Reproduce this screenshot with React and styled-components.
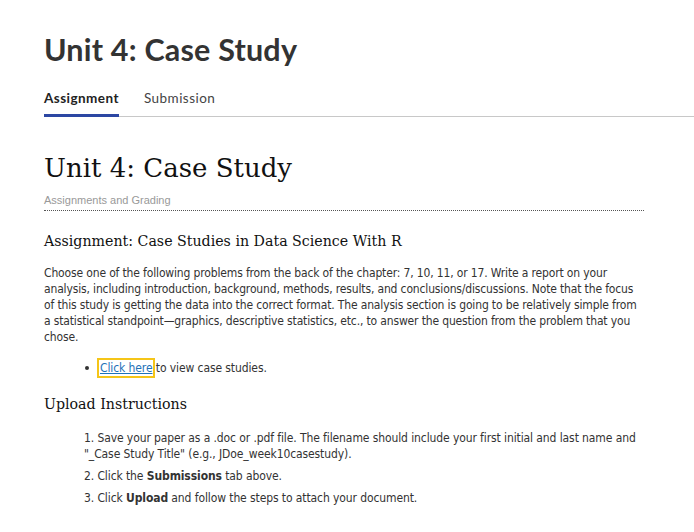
import React from "react";
import styled, { createGlobalStyle } from "styled-components";

const Global = createGlobalStyle`
  html, body { margin: 0; padding: 0; background: #fff; }
  body { font-family: "DejaVu Sans Condensed", "DejaVu Sans", sans-serif; color: #333; }
`;

const Page = styled.div`
  padding: 30px 0 0 44px;
`;

const TopTitle = styled.h1`
  margin: 0;
  font-family: Lato, "Open Sans", sans-serif;
  font-weight: 700;
  font-size: 30.5px;
  line-height: 38px;
  color: #333;
  letter-spacing: 0.2px;
`;

const Tabs = styled.nav`
  display: flex;
  gap: 25px;
  margin-top: 22px;
  border-bottom: 1px solid #c8c8c8;
`;

const Tab = styled.div`
  font-family: Lato, "Open Sans", sans-serif;
  font-size: 13.5px;
  font-weight: ${(p) => (p.$active ? 700 : 400)};
  color: ${(p) => (p.$active ? "#222" : "#444")};
  padding: 0 0 8px;
  border-bottom: 3px solid ${(p) => (p.$active ? "#2c47a3" : "transparent")};
  margin-bottom: -1px;
  letter-spacing: 0.45px;
`;

const Content = styled.div`
  width: 600px;
`;

const SerifTitle = styled.h2`
  margin: 31px 0 0;
  font-family: "DejaVu Serif", "Liberation Serif", serif;
  font-weight: 400;
  font-size: 26px;
  line-height: 40px;
  color: #111;
`;

const Meta = styled.div`
  font-family: "Liberation Sans", Arial, sans-serif;
  font-size: 11px;
  color: #999;
  padding: 6px 0 4px;
  border-bottom: 1px dotted #555;
`;

const SectionTitle = styled.h3`
  margin: ${(p) => p.$mt || "20px"} 0 0;
  font-family: "DejaVu Serif", "Liberation Serif", serif;
  font-weight: 400;
  font-size: 14.2px;
  line-height: 20px;
  color: #111;
`;

const Para = styled.p`
  margin: 14px 0 0;
  font-size: 12px;
  line-height: 16px;
  letter-spacing: -0.15px;
`;

const Bullets = styled.ul`
  margin: 14px 0 0;
  padding-left: 56px;
  font-size: 12px;
  line-height: 16px;
  letter-spacing: -0.1px;

  li::marker {
    font-family: "Liberation Sans", Arial, sans-serif;
    font-size: 14px;
    color: #333;
  }
`;

const Link = styled.a`
  color: #1f72b8;
  text-decoration: underline;
  outline: 2px solid #f5c518;
  outline-offset: 1px;
`;

const Steps = styled.ol`
  list-style: none;
  margin: 16px 0 0;
  padding-left: 40px;
  font-size: 12px;
  line-height: 16px;
  letter-spacing: -0.1px;
`;

const Step = styled.li`
  margin-bottom: 6px;
`;

export default function App() {
  return (
    <>
      <Global />
      <Page>
        <TopTitle>Unit 4: Case Study</TopTitle>
        <Tabs>
          <Tab $active>Assignment</Tab>
          <Tab>Submission</Tab>
        </Tabs>
        <Content>
          <SerifTitle>Unit 4: Case Study</SerifTitle>
          <Meta>Assignments and Grading</Meta>
          <SectionTitle>Assignment: Case Studies in Data Science With R</SectionTitle>
          <Para>
            Choose one of the following problems from the back of the chapter: 7, 10, 11, or 17. Write a report on your
            analysis, including introduction, background, methods, results, and conclusions/discussions. Note that the focus
            of this study is getting the data into the correct format. The analysis section is going to be relatively simple from
            a statistical standpoint—graphics, descriptive statistics, etc., to answer the question from the problem that you
            chose.
          </Para>
          <Bullets>
            <li>
              <Link href="#">Click here</Link> to view case studies.
            </li>
          </Bullets>
          <SectionTitle $mt="18px">Upload Instructions</SectionTitle>
          <Steps>
            <Step>
              1. Save your paper as a .doc or .pdf file. The filename should include your first initial and last name and
              "_Case Study Title" (e.g., JDoe_week10casestudy).
            </Step>
            <Step>
              2. Click the <b>Submissions</b> tab above.
            </Step>
            <Step>
              3. Click <b>Upload</b> and follow the steps to attach your document.
            </Step>
          </Steps>
        </Content>
      </Page>
    </>
  );
}
